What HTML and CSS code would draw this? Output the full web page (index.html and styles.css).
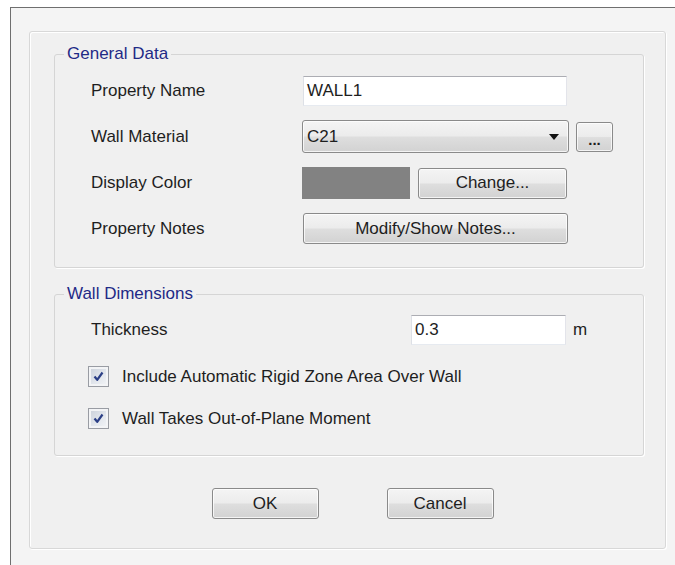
FILE: index.html
```html
<!DOCTYPE html>
<html lang="en">
<head>
<meta charset="utf-8">
<title>Wall Property Data</title>
<link rel="stylesheet" href="styles.css">
</head>
<body>
<div class="window">
  <div class="panel">
    <fieldset class="group group-general">
      <legend>General Data</legend>
      <div class="fields">
        <div class="field">
          <span class="field-label">Property Name</span>
          <div class="textbox textbox-name">WALL1</div>
        </div>
        <div class="field">
          <span class="field-label">Wall Material</span>
          <div class="btn combo">
            <span>C21</span>
            <svg class="combo-arrow" width="10" height="6" viewBox="0 0 10 6"><path d="M0 0H10L5 6Z" fill="#111"/></svg>
          </div>
          <div class="btn btn-more">...</div>
        </div>
        <div class="field">
          <span class="field-label">Display Color</span>
          <div class="swatch"></div>
          <div class="btn btn-change">Change...</div>
        </div>
        <div class="field">
          <span class="field-label">Property Notes</span>
          <div class="btn btn-notes">Modify/Show Notes...</div>
        </div>
      </div>
    </fieldset>

    <fieldset class="group group-dims">
      <legend>Wall Dimensions</legend>
      <div class="fields fields-dims">
        <div class="field">
          <span class="field-label field-label-wide">Thickness</span>
          <div class="textbox textbox-thick">0.3</div>
          <span class="unit">m</span>
        </div>
        <div class="check">
          <span class="check-box">
            <svg width="13" height="13" viewBox="0 0 13 13"><path d="M2.5 6.5 L5.2 9.8 L10.5 2.5" fill="none" stroke="#2b3f86" stroke-width="2.2" stroke-linejoin="round"/></svg>
          </span>
          <span>Include Automatic Rigid Zone Area Over Wall</span>
        </div>
        <div class="check">
          <span class="check-box">
            <svg width="13" height="13" viewBox="0 0 13 13"><path d="M2.5 6.5 L5.2 9.8 L10.5 2.5" fill="none" stroke="#2b3f86" stroke-width="2.2" stroke-linejoin="round"/></svg>
          </span>
          <span>Wall Takes Out-of-Plane Moment</span>
        </div>
      </div>
    </fieldset>

    <div class="actions">
      <div class="btn btn-action">OK</div>
      <div class="btn btn-action">Cancel</div>
    </div>
  </div>
</div>
</body>
</html>
```

FILE: styles.css
```css
html, body {
  margin: 0;
  height: 565px;
  overflow: hidden;
  background: #ffffff;
}

body {
  font-family: "Liberation Sans", Arial, sans-serif;
  font-size: 17px;
  color: #1e1e1e;
}

/* dialog frame */
.window {
  box-sizing: border-box;
  height: 558px;
  margin: 7px 0 0 10px;
  padding: 23px 0 0 18px;
  border-top: 1px solid #6f6f6f;
  border-left: 1px solid #6f6f6f;
  background: #f4f4f4;
}

.panel {
  box-sizing: border-box;
  width: 637px;
  height: 518px;
  padding: 12px 21px 0 24px;
  border: 1px solid #d8d8d8;
  border-radius: 3px;
  background: #f0f0f0;
  box-shadow: inset 1px 1px 0 #ffffff, 1px 1px 0 #ffffff;
}

/* group boxes */
.group {
  margin: 0;
  min-width: 0;
  padding: 12px 0 23px 9px;
  border: 1px solid #d5d5d5;
  border-radius: 3px;
  box-shadow: 1px 1px 0 #ffffff;
}

.group legend {
  padding: 0 3px;
  line-height: 20px;
  color: #1f2a86;
}

.group-dims {
  margin-top: 16px;
  padding: 11px 0 26px 9px;
}

.fields {
  display: flex;
  flex-direction: column;
  gap: 14px;
  padding-left: 27px;
}

.fields-dims {
  gap: 21px;
}

.field {
  display: flex;
  align-items: center;
}

.field-label {
  width: 211px;
  flex: none;
}

.field-label-wide {
  width: 320px;
}

/* edit boxes */
.textbox {
  box-sizing: border-box;
  height: 30px;
  display: flex;
  align-items: center;
  padding-left: 3px;
  background: #ffffff;
  border: 1px solid;
  border-color: #acadb3 #e3e4ea #e6eaf0 #dde0e6;
}

.textbox-name {
  width: 264px;
  margin-left: 1px;
}

.textbox-thick {
  width: 155px;
}

.unit {
  margin-left: 7px;
}

/* push buttons */
.btn {
  box-sizing: border-box;
  display: flex;
  align-items: center;
  justify-content: center;
  border: 1px solid #8a8a8a;
  border-radius: 3px;
  background: linear-gradient(#f4f4f4 0%, #ececec 48%, #dedede 52%, #d2d2d2 100%);
  box-shadow: inset 0 0 0 1px rgba(255, 255, 255, 0.75);
  color: #1e1e1e;
}

.combo {
  width: 267px;
  height: 33px;
  justify-content: space-between;
  padding: 0 9px 0 4px;
}

.combo-arrow {
  display: block;
}

.btn-more {
  width: 37px;
  height: 30px;
  margin-left: 7px;
  align-items: flex-end;
  padding-bottom: 4px;
  font-weight: bold;
  font-size: 15px;
  line-height: 14px;
}

.swatch {
  width: 108px;
  height: 32px;
  background: #828282;
}

.btn-change {
  width: 149px;
  height: 31px;
  margin-left: 8px;
}

.btn-notes {
  width: 265px;
  height: 31px;
  margin-left: 1px;
}

/* check boxes */
.check {
  display: flex;
  align-items: center;
  gap: 13px;
  margin-left: -3px;
  height: 21px;
}

.check-box {
  box-sizing: border-box;
  width: 21px;
  height: 21px;
  display: flex;
  align-items: center;
  justify-content: center;
  border: 1px solid #999ca3;
  background: linear-gradient(135deg, #c9cfd9 0%, #e4e8ee 60%, #f4f5f7 100%);
  box-shadow: inset 0 0 0 2px #f3f4f6;
}

.check-box svg {
  display: block;
}

/* dialog buttons */
.actions {
  display: flex;
  justify-content: center;
  gap: 68px;
  margin-top: 32px;
  padding-left: 7px;
}

.btn-action {
  width: 107px;
  height: 31px;
}
```
